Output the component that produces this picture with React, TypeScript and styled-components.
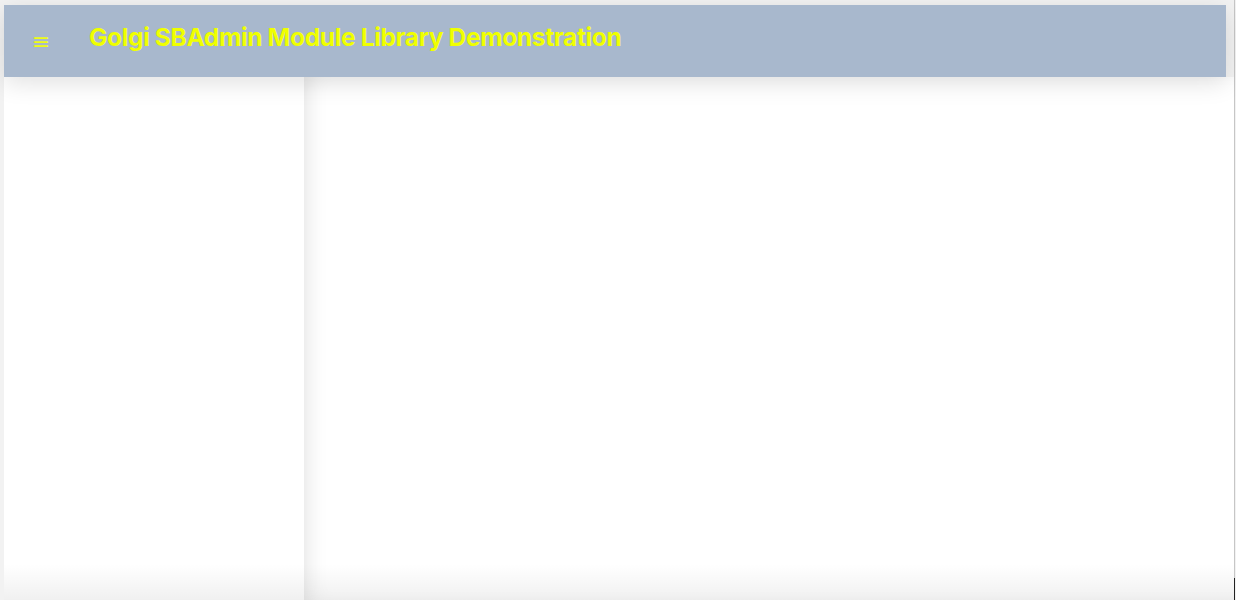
import React from "react";
import styled, { createGlobalStyle } from "styled-components";

const Global = createGlobalStyle`
  html, body { margin: 0; padding: 0; height: 100%; overflow: hidden; }
  body { background: #f2f2f2; font-family: Inter, "Noto Sans", "Liberation Sans", sans-serif; }
  #root { height: 100%; }
`;

const Frame = styled.div`
  position: relative;
  box-sizing: border-box;
  width: 1235px;
  height: 600px;
  padding: 5px 0 0 4px;
  display: flex;
  flex-direction: column;
  background: #f2f2f2;
  border-right: 1px solid #c6c6c6;
`;

const Header = styled.header`
  position: relative;
  z-index: 2;
  height: 72px;
  margin-right: 8px;
  flex: none;
  display: flex;
  align-items: center;
  background: #a8b8cd;
  box-shadow: 0 6px 24px rgba(0, 0, 0, 0.12);
`;

const MenuButton = styled.button`
  width: 30px;
  margin-left: 22px;
  margin-right: 33px;
  margin-top: 2px;
  padding: 0;
  border: none;
  background: none;
  color: #eefc14;
  font-family: "DejaVu Sans", sans-serif;
  font-size: 22px;
  line-height: 1;
  cursor: pointer;
`;

const Title = styled.h1`
  margin: 0 0 8px 0;
  color: #f0ff00;
  font-family: Inter, "Liberation Sans", sans-serif;
  font-weight: 700;
  font-size: 24.5px;
  letter-spacing: -0.35px;
`;

const Body = styled.div`
  flex: 1;
  display: flex;
  min-height: 0;
  background: #fff;
  position: relative;
`;

const Sidebar = styled.aside`
  width: 300px;
  flex: none;
  background: #fff;
`;

const Main = styled.main`
  flex: 1;
  background: #fff;
  box-shadow: inset 14px 0 22px -12px rgba(0, 0, 0, 0.12);
`;

const BottomShade = styled.div`
  position: absolute;
  left: 0;
  right: 0;
  bottom: 0;
  height: 36px;
  pointer-events: none;
  background: linear-gradient(to bottom, rgba(0, 0, 0, 0), rgba(0, 0, 0, 0.06));
`;

const CornerMark = styled.div`
  position: absolute;
  right: -1px;
  bottom: 0;
  width: 1px;
  height: 22px;
  background: #222;
`;

export default function App() {
  return (
    <>
      <Global />
      <Frame>
        <Header>
          <MenuButton aria-label="menu">≡</MenuButton>
          <Title>Golgi SBAdmin Module Library Demonstration</Title>
        </Header>
        <Body>
          <Sidebar />
          <Main />
          <BottomShade />
        </Body>
        <CornerMark />
      </Frame>
    </>
  );
}
